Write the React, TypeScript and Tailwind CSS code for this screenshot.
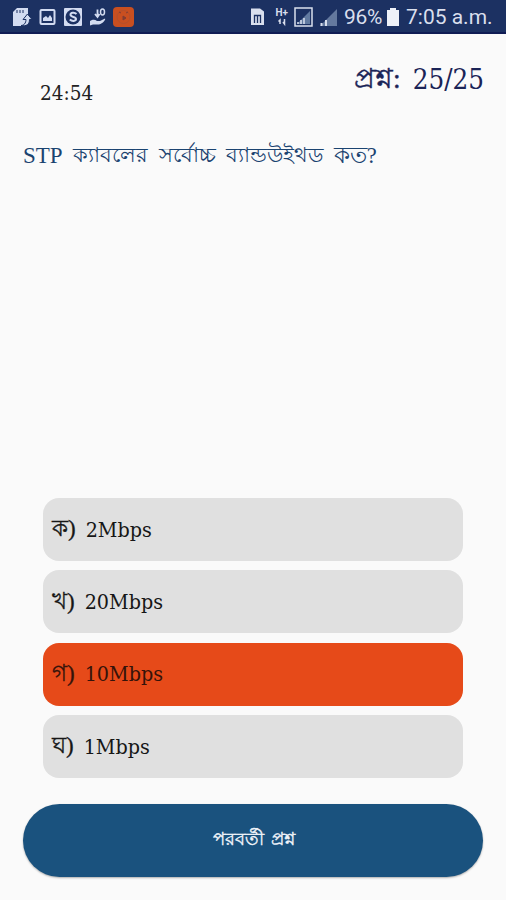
import { ReactNode } from "react"
import clsx from "clsx"

const options = [
    { label: "ক)", text: "2Mbps" },
    { label: "খ)", text: "20Mbps" },
    { label: "গ)", text: "10Mbps" },
    { label: "ঘ)", text: "1Mbps" },
]

const selectedIndex = 2

const NotificationIcons = () => (
    <svg width="112" height="22" viewBox="0 0 112 22" fill="none">
        {/* memory card with transfer arrow */}
        <path d="M17 2H28V13L23 20H13V6Z" fill="#d3dcf1" />
        <path d="M17 4v3M20 4v3M23 4v3" stroke="#1c3162" strokeWidth="1" />
        <path
            d="M21 19.500c3 0 5-2.500 5-6h-3l4.500-5.500 4.500 5.500h-2.500c0 5-3 7-8.500 6z"
            fill="#d3dcf1"
            stroke="#1c3162"
            strokeWidth="1"
        />
        {/* gallery */}
        <rect x="40.500" y="4" width="14" height="14" rx="1" stroke="#d3dcf1" strokeWidth="2" />
        <path d="M43 15v-3l3-2 2 2 2-3 2 3v3z" fill="#d3dcf1" />
        {/* s badge */}
        <rect x="64" y="2" width="18" height="18" rx="1" fill="#d3dcf1" />
        <circle cx="73" cy="11" r="7.500" fill="#1c3162" />
        <path
            d="M76.500 8c-2-2-6-1.500-6 .8 0 2.700 5.500 1.700 5.500 4.200 0 2.300-4 2.600-6.200.5"
            stroke="#d3dcf1"
            strokeWidth="2"
        />
        {/* hand holding dots */}
        <path
            d="M90 15c3-2 5-1.500 7 0h3l5-2.500c1 1-2 5-6 6h-6l-3 1z"
            fill="#d3dcf1"
        />
        <path d="M97.500 3.500v7.500m-2.500-3 2.500 3 2-3" stroke="#d3dcf1" strokeWidth="1.800" />
        <ellipse cx="102.500" cy="6" rx="2" ry="3" stroke="#d3dcf1" strokeWidth="1.500" />
    </svg>
)

const AppBadge = () => (
    <svg width="21" height="21" viewBox="0 0 21 21" fill="none">
        <rect width="21" height="20" rx="4" fill="#c94f20" />
        <circle cx="10.500" cy="10" r="6.500" stroke="#b3502c" />
        <path d="M6 5l2 1M13 6l2-1M10 9l3 2-3 2z" stroke="#813d33" fill="#813d33" />
    </svg>
)

const SignalIcons = () => (
    <svg width="90" height="22" viewBox="0 0 90 22" fill="none">
        {/* sim card */}
        <path d="M1 2.500h9l4 3V19H1z" fill="#d9dfed" />
        <path d="M4.500 17V9.500h6V17M7.500 10v7" stroke="#1c3162" strokeWidth="1.300" />
        <text x="25.500" y="9.500" fontFamily="Roboto" fontSize="10" fontWeight="700" fill="#d9dfed">
            H+
        </text>
        <path d="M30 18v-4l-1.500 1.500M34.500 13v5l-1.500-2" stroke="#d9dfed" strokeWidth="1.500" />
        {/* boxed signal */}
        <rect x="45" y="2" width="17" height="18" stroke="#d9dfed" strokeWidth="1.500" />
        <path d="M60 5v13H47z" fill="#617aa0" />
        <path d="M48 18v-2M51 18v-4M54 18v-6" stroke="#d9dfed" strokeWidth="1.500" />
        <path d="M87 3v17H70z" fill="#64799e" />
        <path d="M71.500 20v-3M76 20v-6" stroke="#d9dfed" strokeWidth="2" />
    </svg>
)

const StatusBar = () => (
    <div className="flex h-[34px] items-center border-b-2 border-[#101c54] bg-[#1c3162] pt-[2px] font-[Roboto] text-[21px] text-[#d9dfed] [font-stretch:normal]">
        <NotificationIcons />
        <div className="ml-px">
            <AppBadge />
        </div>
        <div className="ml-auto flex items-center pr-[14px]">
            <SignalIcons />
            <span className="ml-1 w-[40px] pt-px tracking-[-0.3px]">96%</span>
            <svg className="ml-[3px]" width="12" height="18" viewBox="0 0 12 18">
                <path d="M3 0h6v2h3v16H0V2h3z" fill="#eef1f8" />
            </svg>
            <span className="ml-[7px] w-[86px] pt-px whitespace-nowrap">7:05 a.m.</span>
        </div>
    </div>
)

const Option = ({ selected, children }: { selected: boolean; children: ReactNode }) => (
    <button
        className={clsx(
            "flex h-[63px] items-center gap-[10px] rounded-[16px] pl-[9px] text-left text-[21.300px]",
            selected ? "bg-[#e64a19] text-[#35130a]" : "bg-[#e0e0e0] text-[#161616]"
        )}
    >
        {children}
    </button>
)

export default function App() {
    return (
        <div className="flex h-[900px] w-[506px] flex-col bg-[#fafafa] font-['DejaVu_Serif_Condensed','DejaVu_Serif',serif] [font-stretch:condensed]">
            <StatusBar />
            <header className="flex justify-between pl-[40px] pr-[22px]">
                <span className="mt-[44px] text-[20.5px] leading-[30px] text-[#222]">24:54</span>
                <div className="mt-[26px] flex gap-[12px] text-[27.5px] leading-[38px] text-[#1b2457]">
                    <span className="font-['Liberation_Serif',serif] text-[27.500px] [-webkit-text-stroke:0.4px]">
                        প্রশ্ন:
                    </span>
                    <span>25/25</span>
                </div>
            </header>
            <h1 className="mt-[32px] flex h-[32px] items-center gap-[10.500px] whitespace-nowrap pl-[23px] font-['Liberation_Serif',serif] text-[21.300px] text-[#1a4370]">
                <span className="text-[23px]">STP</span>
                <span>ক্যাবলের</span>
                <span>সর্বোচ্চ</span>
                <span className="text-[20.700px]">ব্যান্ডউইথড</span>
                <span className="text-[22.500px]">কত?</span>
            </h1>
            <main className="mx-[43px] mt-auto flex flex-col gap-[9.300px]">
                {options.map((option, i) => (
                    <Option key={option.label} selected={i === selectedIndex}>
                        <span className="font-['Liberation_Serif',serif] text-[23px] [-webkit-text-stroke:0.3px]">
                            {option.label}
                        </span>
                        <span>{option.text}</span>
                    </Option>
                ))}
            </main>
            <button className="mx-[23px] mt-[26px] mb-[23px] flex h-[73px] items-center justify-center gap-[7px] rounded-full bg-[#1a527e] pb-[2px] pl-[2px] font-['Liberation_Serif',serif] text-[18px] text-[#f0f4fa] shadow-[0_1px_2px_rgba(0,0,0,0.3)] [-webkit-text-stroke:0.4px]">
                <span>পরবর্তী</span>
                <span>প্রশ্ন</span>
            </button>
        </div>
    )
}
